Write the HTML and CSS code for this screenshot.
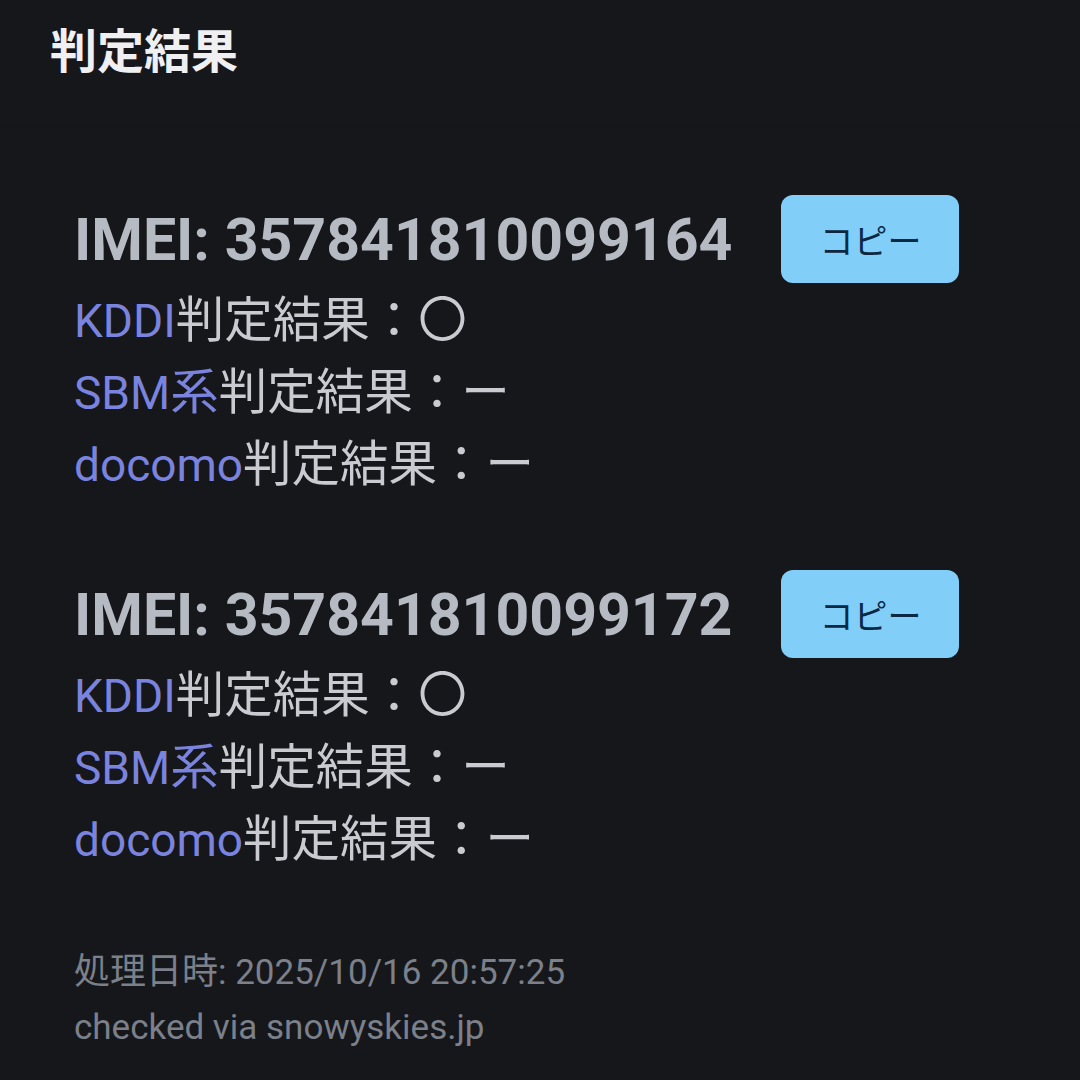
FILE: index.html
```html
<!DOCTYPE html>
<html>
<head>
    <title>判定結果</title>
    <link rel="stylesheet" href="styles.css">
</head>
<body>
    <div class="header">
        <h1>判定結果</h1>
    </div>
    <div class="content">
        <div class="result">
            <div class="imei-row">
                <span class="imei">IMEI: 357841810099164</span>
                <button class="copy">コピー</button>
            </div>
            <div class="line"><span class="carrier">KDDI</span><span class="jp">判定結果：〇</span></div>
            <div class="line"><span class="carrier">SBM<span class="jp">系</span></span><span class="jp">判定結果：ー</span></div>
            <div class="line"><span class="carrier">docomo</span><span class="jp">判定結果：ー</span></div>
        </div>
        <div class="result">
            <div class="imei-row">
                <span class="imei">IMEI: 357841810099172</span>
                <button class="copy">コピー</button>
            </div>
            <div class="line"><span class="carrier">KDDI</span><span class="jp">判定結果：〇</span></div>
            <div class="line"><span class="carrier">SBM<span class="jp">系</span></span><span class="jp">判定結果：ー</span></div>
            <div class="line"><span class="carrier">docomo</span><span class="jp">判定結果：ー</span></div>
        </div>
        <div class="footer">
            <div><span class="jp">処理日時</span>: 2025/10/16 20:57:25</div>
            <div>checked via snowyskies.jp</div>
        </div>
    </div>
</body>
</html>
```

FILE: styles.css
```css
body {
    margin: 0;
    background-color: #16171b;
    font-family: Roboto, "Noto Sans CJK JP", sans-serif;
    color: #c9cbd0;
}
.header {
    height: 127px;
    padding: 20px 0 0 50px;
    box-sizing: border-box;
    border-bottom: 1px solid #131418;
}
.header h1 {
    margin: 0;
    font-size: 47px;
    line-height: 64px;
    font-weight: bold;
    color: #f0f0f2;
}
.content {
    padding: 68px 0 0 74px;
}
.result {
    margin-bottom: 69px;
}
.imei-row {
    display: flex;
    align-items: center;
    gap: 49px;
    margin-bottom: 2px;
}
.imei {
    font-size: 59px;
    font-weight: bold;
    color: #b6bac3;
}
.copy {
    width: 178px;
    height: 88px;
    border: none;
    border-radius: 12px;
    background-color: #81cff8;
    color: #0c2843;
    font-family: "Noto Sans CJK JP", sans-serif;
    font-size: 34px;
    cursor: pointer;
}
.line {
    font-size: 46px;
    line-height: 72px;
}
.line .jp {
    font-size: 48.5px;
}
.carrier {
    color: #7a84df;
}
.footer {
    font-size: 35px;
    line-height: 55px;
    color: #7b808a;
    margin-top: 1px;
}
.footer .jp {
    font-size: 36px;
}
```
